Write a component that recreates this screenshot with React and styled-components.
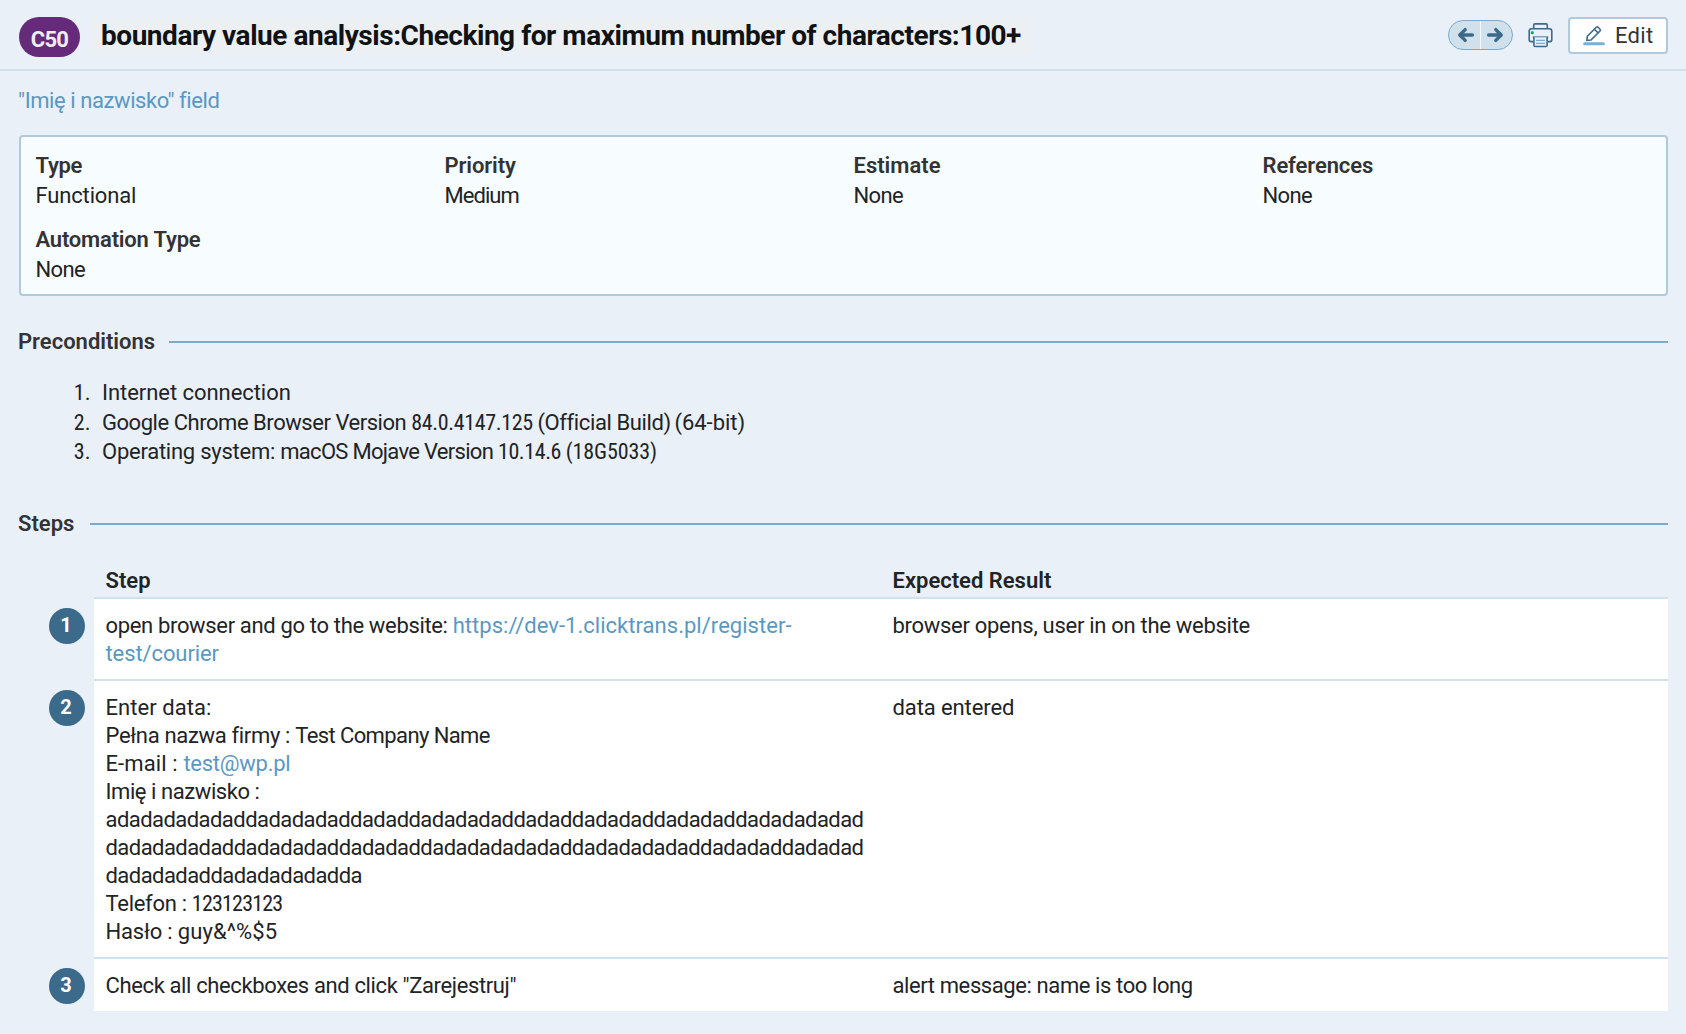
import React from "react";
import styled, { createGlobalStyle } from "styled-components";

const color = {
  page: "#e9f0f8",
  text: "#222324",
  label: "#333333",
  link: "#5a98c2",
  line: "#d0e1eb",
  border: "#aecade",
  rule: "#7aabce",
  dark: "#3b6a8b",
};

const GlobalStyle = createGlobalStyle`
  *, *::before, *::after { box-sizing: border-box; }
  body {
    margin: 0;
    background: ${color.page};
    color: ${color.text};
    font: 400 22px/28px Roboto, "Noto Sans", sans-serif;
  }
`;

const Page = styled.div`
  height: 1034px;
  overflow: hidden;
`;

const Text = styled.span`
  letter-spacing: ${({ $ls = 0 }) => $ls}px;
`;

const Numerals = styled(Text)`
  font-family: "Roboto Condensed", Roboto, sans-serif;
`;

const Link = styled.a`
  color: ${color.link};
  text-decoration: none;
  letter-spacing: ${({ $ls = 0 }) => $ls}px;
`;

/* Header */
const Header = styled.header`
  display: flex;
  align-items: flex-start;
  height: 71px;
  padding: 17px 18px 0 19px;
  border-bottom: 2px solid ${color.line};
`;

const CaseId = styled.span`
  width: 61px;
  height: 40px;
  padding-top: 5px;
  border-radius: 20px;
  background: #662a7b;
  color: #f1edf3;
  font-weight: 700;
  line-height: 36px;
  letter-spacing: -0.7px;
  text-align: center;
`;

const Title = styled.h1`
  margin: 0 auto 0 11px;
  width: 941px;
  height: 36px;
  padding: 1px 0 0 10px;
  background: #ecf0f3;
  color: #101214;
  font-size: 28px;
  font-weight: 700;
  line-height: 36px;
  letter-spacing: -0.46px;
  white-space: nowrap;
`;

const Actions = styled.div`
  display: flex;
  align-items: flex-start;
  gap: 15px;
`;

const Pager = styled.div`
  display: flex;
  width: 65px;
  height: 30px;
  margin-top: 3px;
  border: 1.5px solid ${color.rule};
  border-radius: 15px;
  background: #d0e1eb;
`;

const PagerButton = styled.button`
  flex: 1;
  display: flex;
  align-items: center;
  justify-content: flex-end;
  padding: 0 5px;
  border: 0;
  background: none;

  & + & {
    justify-content: flex-start;
    border-left: 1px solid #f4f8fb;
  }
`;

const PrintButton = styled.button`
  display: flex;
  margin-top: 6px;
  padding: 0;
  border: 0;
  background: none;
`;

const EditButton = styled.button`
  display: flex;
  align-items: flex-start;
  gap: 10px;
  width: 100px;
  height: 37px;
  padding: 0 0 0 13px;
  border: 2px solid ${color.border};
  border-radius: 4px;
  background: #fff;
  color: ${color.label};
  font: inherit;
  line-height: 33px;
  letter-spacing: 0.3px;

  svg {
    flex: none;
    margin-top: 6px;
  }
`;

/* Body */
const Content = styled.main`
  padding: 16px 18px 0 19px;
`;

const Breadcrumb = styled.div`
  height: 28px;
  margin-left: -1px;
`;

const Summary = styled.dl`
  display: grid;
  grid-template-columns: repeat(4, 409px);
  align-content: start;
  row-gap: 14px;
  height: 161px;
  margin: 20px 0 0;
  padding: 14px 0 0 14.5px;
  border: 2px solid ${color.border};
  border-radius: 4px;
  background: #f7fcff;
  line-height: 30px;
`;

const Field = styled.div``;

const FieldName = styled.dt`
  color: ${color.label};
  font-weight: 600;
  letter-spacing: ${({ $ls = 0 }) => $ls}px;
`;

const FieldValue = styled.dd`
  margin: 0;
  letter-spacing: ${({ $ls = 0 }) => $ls}px;
`;

const SectionTitle = styled.h2`
  display: flex;
  align-items: center;
  gap: ${({ $gap }) => $gap}px;
  margin: ${({ $top }) => $top}px 0 0 -1px;
  color: ${color.label};
  font-size: 22px;
  font-weight: 600;
  line-height: 28px;

  &::after {
    content: "";
    flex: 1;
    height: 2px;
    background: ${color.rule};
  }
`;

const Preconditions = styled.ol`
  margin: 22px 0 0;
  padding: 0;
  list-style: none;
  line-height: 29.6px;
`;

const Precondition = styled.li`
  display: grid;
  grid-template-columns: 71.5px 1fr;
  column-gap: 11.5px;
`;

const Ordinal = styled(Numerals)`
  text-align: right;
`;

const Steps = styled.section`
  margin-top: 29px;
`;

const StepRow = styled.div`
  display: grid;
  grid-template-columns: 75px 1fr;
`;

const Gutter = styled.div`
  padding: 9px 0 0 30px;
`;

const StepNumber = styled.span`
  display: block;
  width: 36px;
  height: 36px;
  padding-right: 2px;
  border-radius: 50%;
  background: ${color.dark};
  color: #fff;
  font-size: 20px;
  font-weight: 700;
  line-height: 34px;
  text-align: center;
`;

const StepCells = styled.div`
  display: grid;
  grid-template-columns: 1fr 1fr;
  background: #fff;
  border-bottom: ${({ $last }) => ($last ? "0" : `2px solid ${color.line}`)};
`;

const HeadCells = styled(StepCells)`
  background: none;
  font-weight: 600;
`;

const HeadCell = styled.div`
  padding: 0 12px 2px 11.5px;
`;

const Cell = styled.div`
  min-width: 0;
  padding: 13px 12px 11px 11.5px;
`;

const Line = styled.div`
  overflow-wrap: anywhere;
  letter-spacing: ${({ $ls = 0 }) => $ls}px;
`;

const ArrowIcon = ({ flip }) => (
  <svg width="18" height="18" viewBox="0 0 18 18" fill="none" stroke={color.dark} strokeWidth="3.4" strokeLinecap="round" strokeLinejoin="round">
    <g transform={flip ? "translate(18 0) scale(-1 1)" : undefined}>
      <path d="M8.2 3.6 2.8 9l5.4 5.4" />
      <path d="M3.4 9H15.4" />
    </g>
  </svg>
);

const PrinterIcon = () => (
  <svg width="25" height="25" viewBox="0 0 25 25" fill="none" stroke={color.dark} strokeWidth="1.6" strokeLinejoin="round">
    <path d="M5.7 6V2.2Q5.7 0.9 7 0.9H18Q19.3 0.9 19.3 2.2V6" />
    <path d="M5.2 18.6H3Q1.2 18.6 1.2 16.8V8.2Q1.2 5.8 3.6 5.8H21.4Q23.8 5.8 23.8 8.2V16.8Q23.8 18.6 22 18.6H19.8" />
    <path d="M4.8 14.2H20.2" />
    <path d="M5.9 14.2V22.2Q5.9 23.5 7.2 23.5H17.8Q19.1 23.5 19.1 22.2V14.2" fill={color.page} />
    <path d="M8 17.3H17M8 20.3H17" stroke="#7aabce" strokeWidth="1.3" />
    <circle cx="4.3" cy="9.7" r="1.6" fill="#1f9f78" stroke="none" />
  </svg>
);

const PencilIcon = () => (
  <svg width="22" height="22" viewBox="0 0 22 22" fill="none" stroke={color.dark} strokeWidth="1.6" strokeLinejoin="round" strokeLinecap="round">
    <path d="M3.9 15.4 4.3 11.3 13.3 2.3Q14.2 1.4 15.1 2.3L17 4.2Q17.9 5.1 17 6L8 15Z" />
    <path d="M11.4 4.3 14.9 7.8" />
    <path d="M1.6 18.8H20.4" stroke="#7fafd0" strokeWidth="3" />
  </svg>
);

const fields = [
  { name: "Type", value: "Functional", nameLs: -0.3, valueLs: -0.15 },
  { name: "Priority", value: "Medium", nameLs: -0.1, valueLs: -0.95 },
  { name: "Estimate", value: "None", valueLs: -0.6 },
  { name: "References", value: "None", nameLs: -0.1, valueLs: -0.6 },
  { name: "Automation Type", value: "None", nameLs: -0.2, valueLs: -0.6 },
];

const preconditions = [
  <Text $ls={-0.05}>Internet connection</Text>,
  <>
    <Text $ls={-0.46}>Google Chrome Browser Version </Text>
    <Numerals $ls={-0.35}>84.0.4147.125 </Numerals>
    <Text $ls={-0.38}>(Official Build)</Text>
    <Numerals $ls={-1.5}> </Numerals>
    <Text $ls={-0.02}>(64-bit)</Text>
  </>,
  <>
    <Text $ls={-0.25}>Operating system: </Text>
    <Text $ls={-0.7}>macOS Mojave Version </Text>
    <Numerals $ls={-0.4}>10.14.6 </Numerals>
    <Numerals $ls={-0.1}>(18G5033)</Numerals>
  </>,
];

const longName = [
  "adadadadadaddadadadaddadaddadadadaddadaddadadaddadadaddadadadadad",
  "dadadadadaddadadadaddadadaddadadadadadaddadadadadaddadadaddadadad",
  "dadadadaddadadadadadda",
];

const nameSegments = [
  "adadadadadad", "dadadadad", "dadad", "dadadadad", "dadad", "dadadad", "dadadad", "dadadadadad",
  "dadadadadad", "dadadadad", "dadadad", "dadadadadadad", "dadadadadad", "dadadad", "dadadad",
  "dadadadad", "dadadadadad", "da",
];

const steps = [
  {
    step: (
      <Line>
        <Text $ls={-0.34}>open browser and go to the website: </Text>
        <Link $ls={0.03}>
          https://dev-1.clicktrans.pl/register-
          <br />
          <Text $ls={-0.1}>test/courier</Text>
        </Link>
      </Line>
    ),
    result: <Line $ls={-0.29}>browser opens, user in on the website</Line>,
  },
  {
    step: (
      <>
        <Line $ls={0.05}>Enter data:</Line>
        <Line>
          <Text $ls={-0.33}>Pełna nazwa firmy : </Text>
          <Text $ls={-0.6}>Test Company Name</Text>
        </Line>
        <Line>
          <Text $ls={0.12}>E-mail : </Text>
          <Link $ls={-0.25}>test@wp.pl</Link>
        </Line>
        <Line $ls={-0.43}>Imię i nazwisko :</Line>
        <Line $ls={-0.55}>{nameSegments.join("")}</Line>
        <Line>
          <Text $ls={-0.3}>Telefon : </Text>
          <Numerals $ls={-0.8}>123123123</Numerals>
        </Line>
        <Line>
          <Text $ls={-0.2}>Hasło : </Text>
          <Text $ls={0.12}>guy&amp;^%$5</Text>
        </Line>
      </>
    ),
    result: <Line $ls={-0.1}>data entered</Line>,
  },
  {
    step: <Line $ls={-0.37}>Check all checkboxes and click "Zarejestruj"</Line>,
    result: <Line $ls={-0.4}>alert message: name is too long</Line>,
  },
];

export default function App() {
  return (
    <Page>
      <GlobalStyle />
      <Header>
        <CaseId>C50</CaseId>
        <Title>boundary value analysis:Checking for maximum number of characters:100+</Title>
        <Actions>
          <Pager>
            <PagerButton aria-label="Previous"><ArrowIcon /></PagerButton>
            <PagerButton aria-label="Next"><ArrowIcon flip /></PagerButton>
          </Pager>
          <PrintButton aria-label="Print"><PrinterIcon /></PrintButton>
          <EditButton><PencilIcon />Edit</EditButton>
        </Actions>
      </Header>
      <Content>
        <Breadcrumb>
          <Link $ls={-0.42}>"Imię i nazwisko" field</Link>
        </Breadcrumb>
        <Summary>
          {fields.map((f) => (
            <Field key={f.name}>
              <FieldName $ls={f.nameLs}>{f.name}</FieldName>
              <FieldValue $ls={f.valueLs}>{f.value}</FieldValue>
            </Field>
          ))}
        </Summary>
        <SectionTitle $top={32} $gap={14}>Preconditions</SectionTitle>
        <Preconditions>
          {preconditions.map((item, i) => (
            <Precondition key={i}>
              <Ordinal>{i + 1}.</Ordinal>
              <div>{item}</div>
            </Precondition>
          ))}
        </Preconditions>
        <SectionTitle $top={43.2} $gap={16}>Steps</SectionTitle>
        <Steps>
          <StepRow>
            <div />
            <HeadCells>
              <HeadCell>Step</HeadCell>
              <HeadCell>Expected Result</HeadCell>
            </HeadCells>
          </StepRow>
          {steps.map((s, i) => (
            <StepRow key={i}>
              <Gutter><StepNumber>{i + 1}</StepNumber></Gutter>
              <StepCells $last={i === steps.length - 1}>
                <Cell>{s.step}</Cell>
                <Cell>{s.result}</Cell>
              </StepCells>
            </StepRow>
          ))}
        </Steps>
      </Content>
    </Page>
  );
}
